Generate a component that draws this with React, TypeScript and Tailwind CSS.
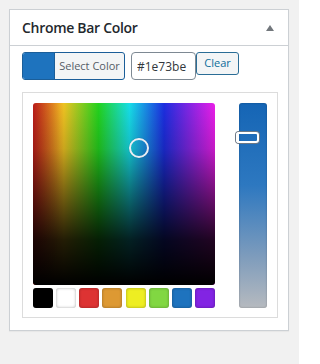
const swatches = ['#000000', '#ffffff', '#dd3333', '#dd9933', '#eeee22', '#81d742', '#1e73be', '#8224e3']

export default function App(): React.JSX.Element {
  return (
    <div className="w-[299px] h-[364px] bg-[#f1f1f1] pt-[9px] pl-[9px] font-['Open_Sans','Noto_Sans',sans-serif]">
      <div className="w-[280px] bg-white border border-[#ccd0d4] shadow-[0_1px_1px_rgba(0,0,0,0.04)]">
        {/* Header */}
        <div className="h-[36px] flex items-center justify-between pl-[12px] pr-[14px] border-b border-[#ccd0d4]">
          <span className="text-[14px] font-semibold text-[#23282d] tracking-[-0.3px]">Chrome Bar Color</span>
          <span className="w-0 h-0 border-l-[4px] border-r-[4px] border-b-[6px] border-l-transparent border-r-transparent border-b-[#72777c]" />
        </div>

        {/* Body */}
        <div className="px-[12px] pt-[6px] pb-[12px]">
          <div className="flex items-start">
            <button
              type="button"
              className="h-[28px] w-[103px] flex rounded-[3px] overflow-hidden border border-[#1b5e99] bg-[#f3f5f6]"
            >
              <span className="w-[31px] h-full bg-[#1e73be]" />
              <span className="flex-1 h-full flex items-center justify-center text-[11px] text-[#555d66] border-l border-[#1b5e99]">
                Select Color
              </span>
            </button>
            <input
              readOnly
              value="#1e73be"
              className="ml-[6px] h-[28px] w-[65px] rounded-[4px] border border-[#7e8993] px-[5px] text-[12px] text-[#32373c] outline-none"
            />
            <button
              type="button"
              className="h-[23px] w-[43px] rounded-[3px] border border-[#2a6d96] bg-[#f3f5f6] text-[11px] text-[#0b6d9b]"
            >
              Clear
            </button>
          </div>

          {/* Picker */}
          <div className="mt-[12px] w-[256px] border border-[#dcdcdc] pt-[10px] pl-[10px] pr-[10px] pb-[9px] flex gap-[24px]">
            <div className="w-[182px] flex flex-col gap-[3px]">
              <div className="relative w-[182px] h-[182px] rounded-[3px] overflow-hidden bg-[linear-gradient(to_right,#e8241f,#eec322_17%,#23d31e_36%,#17dde8_53%,#1c2ee0_72%,#ea1ee8_100%)]">
                <div className="absolute inset-0 bg-[linear-gradient(to_bottom,rgba(0,0,0,0)_0%,rgba(0,0,0,0.15)_25%,rgba(0,0,0,0.5)_50%,rgba(0,0,0,0.85)_75%,#000_100%)]" />
                <div className="absolute inset-0 bg-[linear-gradient(to_right,rgba(0,0,0,0.2),rgba(0,0,0,0)_15%)]" />
                <span className="absolute left-[96px] top-[35px] w-[20px] h-[20px] rounded-full border-[2.5px] border-[#e8ecf2] shadow-[0_0_1px_rgba(0,0,0,0.4)]" />
              </div>
              <div className="flex justify-between">
                {swatches.map((c) => (
                  <span
                    key={c}
                    className="w-[20px] h-[20px] rounded-[3px] shadow-[inset_0_0_3px_rgba(0,0,0,0.35)]"
                    style={{ backgroundColor: c }}
                  />
                ))}
              </div>
            </div>
            <div className="relative w-[28px] h-[205px] rounded-[3px] bg-[linear-gradient(to_bottom,#1565b5,#2d78c0_40%,#7e9cbc_75%,#b6babf_100%)] shadow-[inset_0_0_2px_rgba(0,0,0,0.3)]">
              <span className="absolute left-[-3px] top-[29px] w-[23px] h-[11px] rounded-[3px] border-[2px] border-white ring-1 ring-[#6b7785]" />
            </div>
          </div>
        </div>
      </div>
    </div>
  )
}
